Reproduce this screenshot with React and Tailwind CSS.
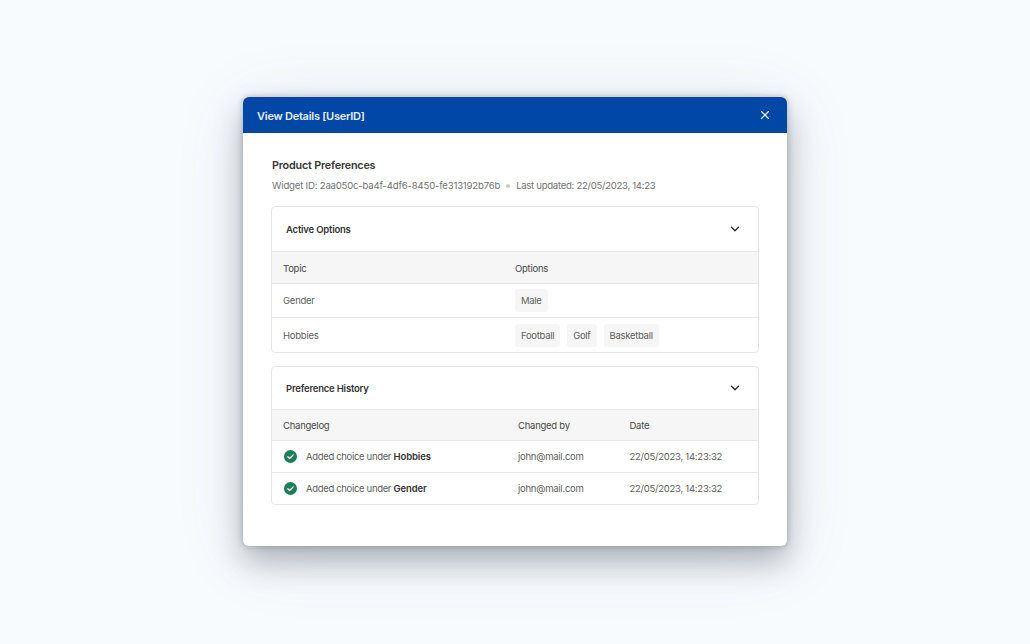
import { X, ChevronDown } from 'lucide-react';

function Chip({ children }) {
  return <span className="h-[23px] px-[6px] pt-[1px] flex items-center rounded-[3px] bg-[#f6f6f6] tracking-[-0.3px]">{children}</span>;
}

function CheckBadge() {
  return (
    <svg width="13" height="13" viewBox="0 0 13 13" className="shrink-0">
      <circle cx="6.5" cy="6.5" r="6.5" fill="#178059" />
      <path d="M3.8 6.7 5.7 8.5 9.2 4.9" fill="none" stroke="#fff" strokeWidth="1.3" strokeLinecap="round" strokeLinejoin="round" />
    </svg>
  );
}

function CardHead({ title, height }) {
  return (
    <div className={`flex items-center justify-between pl-[14px] pr-[16px] ${height}`}>
      <h3 className="pt-[2px] text-[9.5px] tracking-[-0.2px] font-semibold text-[#333]">{title}</h3>
      <ChevronDown size={14} strokeWidth={2.2} className="text-[#2a2a2a]" />
    </div>
  );
}

const history = [
  { field: 'Hobbies', by: 'john@mail.com', date: '22/05/2023, 14:23:32' },
  { field: 'Gender', by: 'john@mail.com', date: '22/05/2023, 14:23:32' },
];

export default function App() {
  return (
    <div className="h-screen overflow-hidden bg-[#f8fbfe] flex justify-center pt-[97px] font-['Inter',sans-serif] text-[9.5px] leading-[16px] tracking-[-0.25px] text-[#606060]">
      <div className="w-[544px] h-[449px] flex flex-col bg-white rounded-[6px] overflow-hidden shadow-[0_16px_30px_rgba(45,55,70,0.32),0_0_6px_rgba(45,55,70,0.3),0_10px_70px_rgba(60,75,95,0.12)]">
        {/* Header */}
        <div className="h-[36px] shrink-0 bg-[#0047a6] flex items-center justify-between pl-[14px] pr-[15px]">
          <h2 className="text-[11px] tracking-[-0.25px] font-semibold text-[#e8eef8] pt-[1px]">View Details [UserID]</h2>
          <X size={14} strokeWidth={2} className="text-white" />
        </div>

        <div className="px-[28px] pt-[26px]">
          <h1 className="pl-[1px] text-[10.8px] tracking-[-0.2px] leading-[14px] font-semibold text-[#383838]">Product Preferences</h1>
          <div className="pl-[1px] flex items-center mt-[6px] h-[14px] text-[9.6px] tracking-[-0.2px] text-[#747474]">
            <span>Widget ID: 2aa050c-ba4f-4df6-8450-fe313192b76b</span>
            <span className="w-[4px] h-[4px] rounded-full bg-[#c9c9c9] mx-[6px]" />
            <span className="tracking-[-0.3px]">Last updated: 22/05/2023, 14:23</span>
          </div>

          {/* Active Options */}
          <div className="mt-[13px] h-[147px] border border-[#e6e6e6] rounded-[4px] overflow-hidden">
            <CardHead title="Active Options" height="h-[44px]" />
            <div className="grid grid-cols-[232px_1fr] pl-[11px] pt-[2px] items-center h-[33px] bg-[#f6f6f6] border-y border-[#e8e8e8] text-[#484848]">
              <span>Topic</span>
              <span>Options</span>
            </div>
            <div className="grid grid-cols-[232px_1fr] pl-[11px] items-center h-[34px] border-b border-[#e8e8e8]">
              <span className="pt-[1px]">Gender</span>
              <div className="flex"><Chip>Male</Chip></div>
            </div>
            <div className="grid grid-cols-[232px_1fr] pl-[11px] items-center h-[34px]">
              <span className="pt-[1px]">Hobbies</span>
              <div className="flex gap-[7px]">
                <Chip>Football</Chip>
                <Chip>Golf</Chip>
                <Chip>Basketball</Chip>
              </div>
            </div>
          </div>

          {/* Preference History */}
          <div className="mt-[13px] h-[139px] border border-[#e6e6e6] rounded-[4px] overflow-hidden">
            <CardHead title="Preference History" height="h-[42px]" />
            <div className="grid grid-cols-[235px_111.5px_1fr] pl-[11px] pt-[1px] items-center h-[32px] bg-[#f6f6f6] border-y border-[#e8e8e8] text-[#484848]">
              <span>Changelog</span>
              <span>Changed by</span>
              <span>Date</span>
            </div>
            {history.map((row, i) => (
              <div key={row.field} className={`grid grid-cols-[235px_111.5px_1fr] pl-[11px] items-center ${i === 0 ? 'h-[32px] border-b border-[#e8e8e8]' : 'h-[31px]'}`}>
                <div className="flex items-center gap-[9px] pl-[1px]">
                  <CheckBadge />
                  <span className="pt-[1px] tracking-[-0.33px]">Added choice under <b className="font-semibold text-[#333] tracking-[-0.1px]">{row.field}</b></span>
                </div>
                <span className="pt-[1px]">{row.by}</span>
                <span className="pt-[1px]">{row.date}</span>
              </div>
            ))}
          </div>
        </div>
      </div>
    </div>
  );
}
